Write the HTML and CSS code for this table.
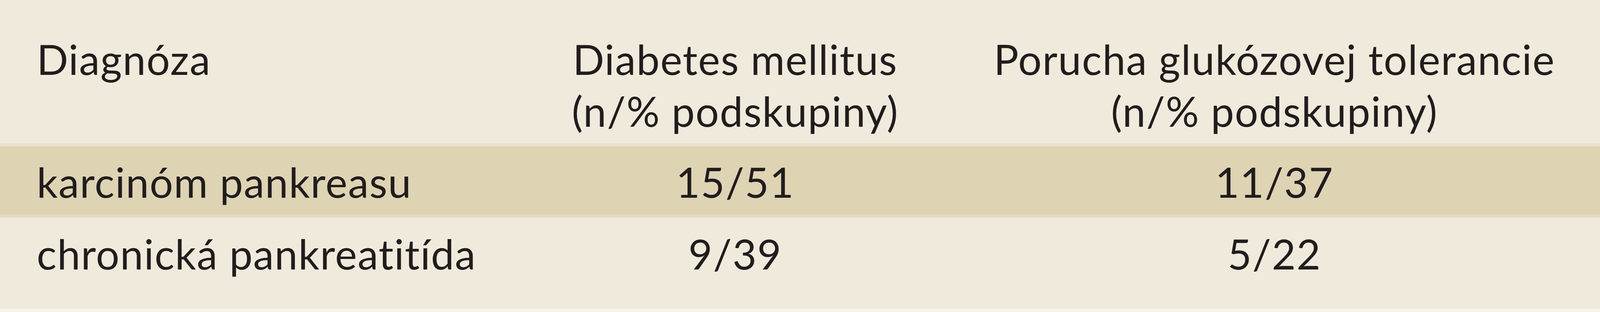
FILE: index.html
```html
<!DOCTYPE html>
<html lang="sk">
<head>
<meta charset="utf-8">
<title>Diagnóza</title>
<link rel="stylesheet" href="styles.css">
</head>
<body>
<div class="table">
  <div class="row head">
    <div class="cell first">Diagnóza</div>
    <div class="cell">Diabetes mellitus<br>(n/% podskupiny)</div>
    <div class="cell last">Porucha glukózovej tolerancie<br>(n/% podskupiny)</div>
  </div>
  <div class="row band">
    <div class="cell first">karcinóm pankreasu</div>
    <div class="cell">15/51</div>
    <div class="cell last">11/37</div>
  </div>
  <div class="row plain">
    <div class="cell first">chronická pankreatitída</div>
    <div class="cell">9/39</div>
    <div class="cell last">5/22</div>
  </div>
</div>
</body>
</html>
```

FILE: styles.css
```css
html, body {
  margin: 0;
  padding: 0;
}
body {
  background: #f8f5ee;
  width: 4125px;
  height: 800px;
  overflow: hidden;
  font-family: Lato, "Open Sans", sans-serif;
  font-size: 106px;
  line-height: 133px;
  letter-spacing: 1.8px;
  color: #211d1d;
}
.table {
  display: flex;
  flex-direction: column;
}
.row {
  display: grid;
  grid-template-columns: 1340px 1084px 1fr;
}
.cell {
  text-align: center;
  white-space: nowrap;
}
.cell.first {
  text-align: left;
  padding-left: 94px;
}
.cell.last {
  padding-right: 24px;
}
.head {
  background: #efeadc;
  padding: 85px 0 16px;
  border-bottom: 8px solid #e8e1cd;
}
.band {
  background: #ded3b3;
  padding: 25px 0 17px;
  border-bottom: 8px solid #e2dac3;
}
.plain {
  background: #efeadc;
  padding: 26px 0 75px;
}
```
